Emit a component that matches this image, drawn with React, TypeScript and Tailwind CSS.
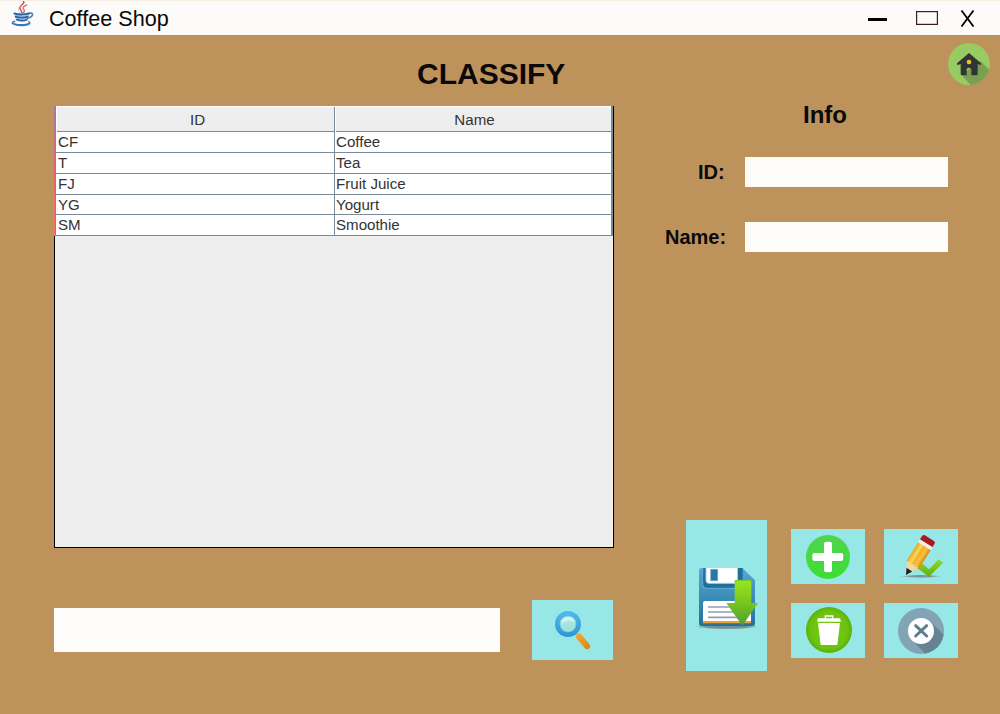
import React from "react";

const rows = [
  { id: "CF", name: "Coffee", size: "h-[21px] leading-[20px]" },
  { id: "T", name: "Tea", size: "h-[21px] leading-[20px]" },
  { id: "FJ", name: "Fruit Juice", size: "h-[21px] leading-[20px]" },
  { id: "YG", name: "Yogurt", size: "h-[20px] leading-[19px]" },
  { id: "SM", name: "Smoothie", size: "h-[21px] leading-[20px]" },
];

function JavaIcon() {
  return (
    <svg className="block h-[30px] w-[24px]" viewBox="0 0 72 90" fill="none" strokeLinecap="round">
      <path d="M37 1c7 8-14 12-10 22 2 5 6 6 5 12" stroke="#c25a55" strokeWidth="4.5" />
      <path d="M47 12c-10 4-14 9-9 13 5 4 2 7-2 10" stroke="#d17f79" strokeWidth="4.5" />
      <path d="M23 20c-3 6-1 9 4 14" stroke="#deb0aa" strokeWidth="2" />
      <path d="M9 37h47l-6 20q-17 6-35 0Z" fill="#a9c9e6" />
      <path d="M53 37c17-5 15 11-4 15" stroke="#4a7fb4" strokeWidth="5" />
      <path d="M10 37c10 5 35 4 44 0M14 47c9 4 28 4 36 0M18 56c8 4 23 4 29 0" stroke="#2765a8" strokeWidth="5.5" />
      <path d="M11 61c-18 6 2 12 22 11 19 0 29-5 20-10" stroke="#3977b9" strokeWidth="4.5" />
      <path d="M5 66c14 5 39 4 54-1-5 13-46 15-54 1Z" fill="#3479c2" />
    </svg>
  );
}

function HomeIcon() {
  return (
    <svg className="block h-[42px] w-[42px]" viewBox="0 0 126 126">
      <defs>
        <clipPath id="home-disc"><circle cx="63" cy="63" r="63" /></clipPath>
      </defs>
      <circle cx="63" cy="63" r="63" fill="#99cb63" />
      <path d="M40 95 97 54 136 92v40H74Z" fill="#7a9f50" clipPath="url(#home-disc)" />
      <path d="M63 30 27 61q-1 5 3 5l8-3v30q0 4 4 4h14V79q0-5 7-5t7 5v18h15q4 0 4-4V63l8 3q4-1 2-5Z" fill="#303436" />
      <circle cx="63" cy="57" r="7" fill="#f5c21a" />
    </svg>
  );
}

function SearchIcon() {
  return (
    <svg className="block h-[60px] w-[81px]" viewBox="36 210 243 180">
      <defs>
        <linearGradient id="ring" x2="0" y2="1"><stop stopColor="#50b6ea" /><stop offset="1" stopColor="#3099d5" /></linearGradient>
        <linearGradient id="lens" x2="0" y2="1"><stop stopColor="#b9eee8" /><stop offset="1" stopColor="#8eddd8" /></linearGradient>
        <linearGradient id="handle" x2="0" y2="1"><stop stopColor="#f5a62c" /><stop offset="1" stopColor="#df8516" /></linearGradient>
      </defs>
      <path d="m165 309 12 9" stroke="#b9c6bd" strokeWidth="8" />
      <rect x="-9" y="-28" width="18" height="56" rx="9" fill="url(#handle)" transform="translate(189 334) rotate(-40)" />
      <circle cx="144" cy="282" r="32" fill="url(#lens)" stroke="url(#ring)" strokeWidth="14" />
      <circle cx="144" cy="282" r="24" fill="none" stroke="#60c0d8" strokeWidth="2" />
      <path d="M124 282c-1-26 37-29 41-3-12-14-32-7-41 3Z" fill="#d0f5ef" />
      <path d="M126 290c5 14 31 15 37 0" fill="none" stroke="#b2e4d4" strokeWidth="3" />
    </svg>
  );
}

function SaveIcon() {
  return (
    <svg className="block h-[151px] w-[81px]" viewBox="18 30 243 453">
      <defs>
        <linearGradient id="disk" x2="0" y2="1"><stop stopColor="#58a8d6" /><stop offset=".6" stopColor="#3787b3" /><stop offset="1" stopColor="#256f9d" /></linearGradient>
        <linearGradient id="arrow" x2="0" y2="1"><stop stopColor="#9ae51f" /><stop offset=".5" stopColor="#79c61c" /><stop offset="1" stopColor="#4d9e35" /></linearGradient>
        <radialGradient id="disk-shadow"><stop offset=".65" stopColor="#748f91" /><stop offset="1" stopColor="#96e7e5" /></radialGradient>
      </defs>
      <ellipse cx="140" cy="350" rx="94" ry="8" fill="url(#disk-shadow)" />
      <path d="M63 174H187l38 37v131q0 6-7 6H65q-8 0-8-8V182q0-8 6-8Z" fill="url(#disk)" />
      <path d="M70 174h118v49q0 11-10 11H79q-10 0-10-11Z" fill="#20709b" />
      <path d="M68 213v11q0 11 11 11h93" fill="none" stroke="#69acd3" strokeWidth="3" />
      <path d="M78 174h95v46H85q-7 0-7-7Z" fill="#fff" />
      <path d="M78 174v38q0 8 8 8h86" fill="none" stroke="#a8cce2" strokeWidth="3" />
      <path d="M92 178h21v34H92Z" fill="#2679a4" />
      <path d="M92 178h21v34H92Z" fill="none" stroke="#68a7c6" strokeWidth="2" />
      <path d="M75 273h138v62H69v-55q0-7 6-7Z" fill="#fff" />
      <path d="M69 333h144v7H69Z" fill="#eba03a" />
      <path d="M84 291h77M84 306h81M84 322h88" stroke="#8e9eb9" strokeWidth="5" />
      <path d="M164 216q0-6 6-6h38q6 0 6 6v63h20l-47 68-48-68h25Z" fill="url(#arrow)" />
      <path d="M164 216q0-5 6-5h38q6 0 6 5" fill="none" stroke="#72c12f" strokeWidth="3" />
    </svg>
  );
}

function AddIcon() {
  return (
    <svg className="block h-[55px] w-[74px]" viewBox="18 27 222 165">
      <defs><linearGradient id="add" x2="0" y2="1"><stop stopColor="#51d451" /><stop offset="1" stopColor="#3dde34" /></linearGradient></defs>
      <circle cx="129" cy="111" r="66" fill="url(#add)" />
      <path d="M129 75v75M92 112h75" stroke="#3aae44" strokeWidth="25" strokeLinecap="round" opacity=".3" />
      <rect x="117" y="65" width="24" height="92" rx="7" fill="#fff" />
      <rect x="82" y="99" width="93" height="24" rx="7" fill="#fff" />
    </svg>
  );
}

function EditIcon() {
  return (
    <svg className="block h-[55px] w-[74px]" viewBox="12 27 222 165">
      <defs>
        <linearGradient id="pencil"><stop stopColor="#e9a322" /><stop offset=".3" stopColor="#ffd654" /><stop offset=".5" stopColor="#efaf25" /><stop offset=".7" stopColor="#f4c443" /><stop offset="1" stopColor="#d88b13" /></linearGradient>
        <linearGradient id="check" x2="0" y2="1"><stop stopColor="#94d92a" /><stop offset="1" stopColor="#5fae18" /></linearGradient>
        <radialGradient id="edit-shadow"><stop offset=".5" stopColor="#789899" /><stop offset="1" stopColor="#96e7e5" /></radialGradient>
      </defs>
      <ellipse cx="122" cy="169" rx="62" ry="5" fill="url(#edit-shadow)" />
      <path d="m112 145 16-14 19 17 29-30 13 10-42 42Z" fill="url(#check)" />
      <g transform="translate(78 165) rotate(32)">
        <path d="M0 0-20-38H20Z" fill="#f1d6a2" />
        <path d="M0 0-10-19H10Z" fill="#202124" />
        <path d="M-21-36V-103H23v67q-7-5-14 0-8-6-16 0-7-5-14 0Z" fill="url(#pencil)" />
        <path d="M-21-103H23v-10h-44Z" fill="#f3eee9" />
        <path d="M-21-113v-12q0-6 6-6h32q6 0 6 6v12Z" fill="#a81922" />
      </g>
    </svg>
  );
}

function DeleteIcon() {
  return (
    <svg className="block h-[55px] w-[74px]" viewBox="18 249 222 165">
      <defs><radialGradient id="trash"><stop stopColor="#78cd12" /><stop offset=".8" stopColor="#6cc20f" /><stop offset="1" stopColor="#5bb00a" /></radialGradient></defs>
      <circle cx="132" cy="330" r="69" fill="url(#trash)" />
      <path d="M121 296v-8h22v8" fill="none" stroke="#fff" strokeWidth="4" />
      <path d="M99 295h66l3 10H96ZM99 309h66l-8 66h-50Z" fill="#fff" />
    </svg>
  );
}

function CancelIcon() {
  return (
    <svg className="block h-[55px] w-[74px]" viewBox="12 249 222 165">
      <defs><clipPath id="cancel-disc"><circle cx="123" cy="333" r="69" /></clipPath></defs>
      <circle cx="123" cy="333" r="69" fill="#83a4b7" />
      <path d="m96 361 56-56 60 60-56 56Z" fill="#678391" clipPath="url(#cancel-disc)" />
      <circle cx="123" cy="333" r="39" fill="#fff" />
      <path d="m107 317 33 31m0-31-33 31" stroke="#5e7d8d" strokeWidth="9" strokeLinecap="round" />
    </svg>
  );
}

function IconButton({ label, children }: { label: string; children: React.ReactNode }) {
  return <button aria-label={label} className="block bg-[#96e7e5]">{children}</button>;
}

export default function App() {
  return (
    <div className="flex h-[714px] w-[1000px] flex-col overflow-hidden bg-[#be935b] font-['Liberation_Sans',Arial,sans-serif] text-[#0a0a0a]">
      <header className="flex h-[35px] shrink-0 items-start border-t border-[#f5efdf] bg-[#fcfbf9] pl-[11px]">
        <JavaIcon />
        <span className="ml-[14px] pt-[5px] text-[21.6px] leading-[25px]">Coffee Shop</span>
        <div className="ml-auto flex h-[34px] items-center pr-[25px] text-black">
          <span className="mt-[2px] h-[3px] w-[19px] bg-black" />
          <svg className="ml-[29px] block h-[14px] w-[22px]" viewBox="0 0 22 14"><rect x=".6" y=".6" width="20.8" height="12.8" fill="none" stroke="#3b2118" strokeWidth="1.2" /></svg>
          <svg className="ml-[22px] block h-[17px] w-[15px]" viewBox="0 0 15 17"><path d="m1.5.5 12 16m0-16-12 16" stroke="#000" strokeWidth="1.8" /></svg>
        </div>
      </header>

      <div className="flex h-[71px] shrink-0 items-start justify-between pl-[417px] pr-[10px]">
        <h1 className="pt-[22px] text-[30px] leading-[34px] font-bold">CLASSIFY</h1>
        <button aria-label="Home" className="mt-2"><HomeIcon /></button>
      </div>

      <main className="flex flex-1 pl-[54px]">
        <section className="w-[560px]">
          <div className="flex h-[442px] flex-col border-b border-black bg-[#eee]">
            <div className="flex h-[130px] shrink-0 text-[15.1px] text-[#333]">
              <div className="w-px bg-linear-to-b from-[#a07aa8] via-[#e85f72] to-[#ff7567]" />
              <div className="w-px bg-[#7a8a99]" />
              <div className="flex-1">
                <div className="grid h-[26px] grid-cols-[279px_1fr] border-t border-b border-t-white border-b-[#7a8a99] text-center leading-[26px]">
                  <div className="border-r border-l border-r-[#7a8a99] border-l-white pl-[4px]">ID</div>
                  <div className="border-l border-white pl-[2px]">Name</div>
                </div>
                {rows.map((row) => (
                  <div key={row.id} className={`grid grid-cols-[279px_1fr] border-b border-[#7a8a99] bg-white ${row.size}`}>
                    <div className="border-r border-[#7a8a99] pl-[2px]">{row.id}</div>
                    <div className="pl-px">{row.name}</div>
                  </div>
                ))}
              </div>
              <div className="w-[2px] bg-[#7a8a99]" />
              <div className="w-px bg-black" />
            </div>
            <div className="flex-1 border-x border-black" />
          </div>
          <div className="mt-[52px] flex items-center justify-between pr-px">
            <input aria-label="Search" className="h-[44px] w-[446px] bg-[#fdfcfa] px-2 outline-none" />
            <IconButton label="Search classifications"><SearchIcon /></IconButton>
          </div>
        </section>

        <aside className="ml-[51px] flex w-[293px] flex-col">
          <h2 className="pl-[138px] text-[24px] leading-[18px] font-bold">Info</h2>
          <div className="mt-[33px] flex w-[283px] flex-col gap-[35px] text-[20px] leading-[30px] font-bold">
            <label className="flex justify-between"><span className="pl-[33px]">ID:</span><input className="h-[30px] w-[203px] bg-[#fdfcfa] px-2 font-normal outline-none" /></label>
            <label className="flex justify-between"><span>Name:</span><input className="h-[30px] w-[203px] bg-[#fdfcfa] px-2 font-normal outline-none" /></label>
          </div>
          <div className="mt-[268px] flex gap-[24px] pl-[21px]">
            <IconButton label="Save"><SaveIcon /></IconButton>
            <div className="grid grid-cols-[74px_74px] content-start gap-[19px] pt-[9px]">
              <IconButton label="Add"><AddIcon /></IconButton>
              <IconButton label="Edit"><EditIcon /></IconButton>
              <IconButton label="Delete"><DeleteIcon /></IconButton>
              <IconButton label="Cancel"><CancelIcon /></IconButton>
            </div>
          </div>
        </aside>
      </main>
    </div>
  );
}
